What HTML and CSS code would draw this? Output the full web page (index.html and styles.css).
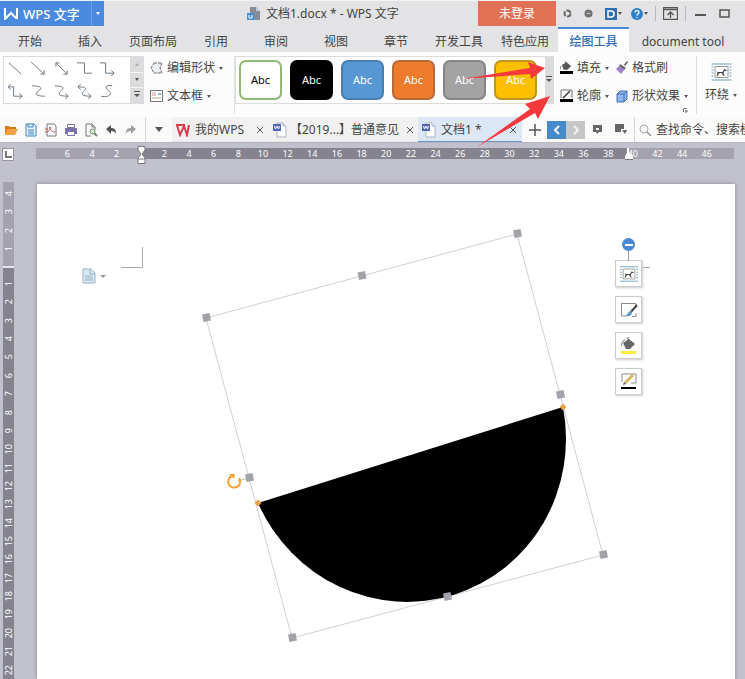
FILE: index.html
```html
<!DOCTYPE html>
<html lang="zh-CN">
<head>
<meta charset="utf-8">
<meta name="viewport" content="width=device-width, initial-scale=1">
<title>文档1.docx * - WPS 文字</title>
<link rel="stylesheet" href="styles.css">
</head>
<body>
<svg class="defs" aria-hidden="true">
  <defs>
    <symbol id="word" viewBox="0 0 14 16"><path d="M4 1h6l3 3v11H4z" fill="#fff" stroke="#a9b2c4"/><path d="M10 1v3h3" fill="#e6ebf4" stroke="#a9b2c4"/><path d="M0 2h8v7H0z" fill="#4f65b5"/><path d="M1.500 4l1 3 1.500-3 1.500 3 1-3" fill="none" stroke="#fff"/></symbol>
    <symbol id="bucket" viewBox="0 0 14 9"><path d="M2 4l5-3 5 4-4 4H4z" fill="#555"/><path d="M6 0v4M1 5c-1 1-1 2 0 3" stroke="#555" fill="none"/></symbol>
    <symbol id="dog" viewBox="0 0 20 18"><path d="M0 1h20M0 17h20M0 4h2M0 7h2M0 10h2M0 13h2M18 4h2M18 7h2M18 10h2M18 13h2" stroke="#6fa0bd"/><path d="M3.500 3.500h13v11h-13z" fill="#fff" stroke="#999"/><path d="M5 8l1 1h5l2-3 2 1v1h-2l-1 2 1 3h-1l-2-3H8l-2 3H5l1-3z" fill="#444"/></symbol>
    <symbol id="cross" viewBox="0 0 8 8"><path d="M1 1l6 6M7 1L1 7" fill="none" stroke="#555"/></symbol>
  </defs>
</svg>

<header class="titlebar">
  <button class="brand">
    <svg width="14" height="12" viewBox="0 0 14 12"><path d="M1 0v11l6-6 5 5h1V0" fill="none" stroke="#fff" stroke-width="2"/></svg>
    <b>WPS 文字</b><span class="brand-caret"><i class="caret"></i></span>
  </button>
  <div class="doc-title">
    <svg width="14" height="14" viewBox="0 0 14 14"><path d="M3 0h6l4 4v9H7V6H3z" fill="#858c98"/><path d="M9 0v4h4" fill="#c8ccd3"/><path d="M0 6h7v7H0z" fill="#4b8ecb"/><path d="M2 8v3h3V8" fill="none" stroke="#fff"/></svg>
    <span>文档1.docx * - WPS 文字</span>
  </div>
  <button class="login">未登录</button>
  <div class="window-tools">
    <button aria-label="同步"><svg width="9" height="9" viewBox="0 0 9 9"><circle cx="4.500" cy="4.500" r="3" fill="none" stroke="#666" stroke-width="2" stroke-dasharray="5 1.300"/></svg></button>
    <button aria-label="皮肤"><svg width="9" height="9" viewBox="0 0 9 9"><circle cx="4.500" cy="4.500" r="4" fill="#747474"/><path d="M3 4.500h3" stroke="#ccc"/></svg></button>
    <button aria-label="稻壳"><svg width="12" height="12" viewBox="0 0 12 12"><path d="M0 0h12v12H0z" fill="#2f6fb0"/><path d="M3 3h3c4 0 4 6 0 6H3z" fill="none" stroke="#fff" stroke-width="1.500"/></svg><i class="caret"></i></button>
    <button aria-label="帮助"><svg width="12" height="12" viewBox="0 0 12 12"><circle cx="6" cy="6" r="6" fill="#2d80c8"/><path d="M4 4.500c0-2.500 4-2.500 4 0 0 1.500-2 1.500-2 3M6 9v1" fill="none" stroke="#fff" stroke-width="1.300"/></svg><i class="caret"></i></button>
    <span class="rule"></span>
    <button aria-label="功能区"><svg width="15" height="13" viewBox="0 0 15 13"><path d="M.5.500h14v12H.500zM0 2.500h15M7.500 11V5M4.500 8l3-3 3 3" fill="none" stroke="#555" stroke-width="1.300"/></svg></button>
    <span class="rule"></span>
    <button class="win" aria-label="最小化"><svg width="11" height="10" viewBox="0 0 11 10"><path d="M0 6h11" stroke="#555" stroke-width="2"/></svg></button>
    <button class="win" aria-label="最大化"><svg width="11" height="9" viewBox="0 0 11 9"><path d="M1 1h9v7H1z" fill="none" stroke="#555" stroke-width="1.500"/></svg></button>
  </div>
</header>

<nav class="tabs">
  <a href="#">开始</a><a href="#">插入</a><a href="#" class="wide">页面布局</a><a href="#">引用</a><a href="#">审阅</a><a href="#">视图</a><a href="#">章节</a><a href="#" class="wide">开发工具</a><a href="#" class="wide">特色应用</a><a href="#" class="wide current">绘图工具</a><a href="#" class="latin">document tool</a>
</nav>

<section class="ribbon">
  <div class="gallery lines">
    <div class="line-grid">
      <button aria-label="直线"><svg viewBox="0 0 16 16"><path d="M1 2l13 12"/></svg></button>
      <button aria-label="箭头"><svg viewBox="0 0 16 16"><path d="M0 1l14 13M14 10v4h-4"/></svg></button>
      <button aria-label="双箭头"><svg viewBox="0 0 16 16"><path d="M2 2l12 12M14 10v4h-4M2 6V2h4"/></svg></button>
      <button aria-label="肘形"><svg viewBox="0 0 16 16"><path d="M0 2h8v11h8"/></svg></button>
      <button aria-label="肘形箭头"><svg viewBox="0 0 16 16"><path d="M0 2h6v11h9M12 10l3 3-3 3"/></svg></button>
      <button aria-label="肘形双箭头"><svg viewBox="0 0 16 16"><path d="M0 3h6v10h9M12 10l3 3-3 3M3 0L0 3l3 3"/></svg></button>
      <button aria-label="曲线"><svg viewBox="0 0 16 16"><path d="M1 2c15 0 8 5 5 7-2 3 3 4 9 4"/></svg></button>
      <button aria-label="曲线箭头"><svg viewBox="0 0 16 16"><path d="M1 2c14 0 7 5 5 7-2 3 2 4 9 4M12 10l3 3-3 3"/></svg></button>
      <button aria-label="曲线双箭头"><svg viewBox="0 0 16 16"><path d="M1 3c13 0 7 4 5 6-2 3 2 4 9 4M12 10l3 3-3 3M4 0L1 3l3 3"/></svg></button>
      <button aria-label="自由曲线"><svg viewBox="0 0 16 16"><path d="M13 2C7 0 4 4 9 7s1 8-8 6"/></svg></button>
    </div>
    <div class="steps"><button aria-label="上"><i class="caret up"></i></button><button aria-label="下"><i class="caret"></i></button><button aria-label="更多"><i class="caret more"></i></button></div>
  </div>
  <div class="stack edit">
    <button><svg width="13" height="12" viewBox="0 0 13 12"><path d="M4 1h8l-2 5 2 5H4L1 6z" fill="#eceef1" stroke="#666" stroke-dasharray="3 1"/></svg><span>编辑形状</span><i class="caret"></i></button>
    <button><svg width="13" height="12" viewBox="0 0 13 12"><path d="M.5.500h12v11H.500z" fill="#fff" stroke="#777"/><path d="M2 3h4M2 5h4M2 8h9" stroke="#c99b91"/><path d="M8 3h3v2H8z" fill="#9bb6d2"/></svg><span>文本框</span><i class="caret"></i></button>
  </div>
  <div class="gallery presets">
    <button class="preset p-white">Abc</button><button class="preset p-black">Abc</button><button class="preset p-blue">Abc</button><button class="preset p-orange">Abc</button><button class="preset p-gray">Abc</button><button class="preset p-gold">Abc</button>
    <button class="expand" aria-label="更多样式"><i class="caret more"></i></button>
  </div>
  <div class="stack format">
    <button><svg width="13" height="14" viewBox="0 0 13 14"><use href="#bucket" width="13" height="9"/><path d="M0 10h13v3H0z"/></svg><span>填充</span><i class="caret"></i></button>
    <button><svg width="13" height="14" viewBox="0 0 13 14"><path d="M1 9V1h11v8" fill="none" stroke="#777"/><path d="M3 9l7-7" stroke="#333" stroke-width="1.500"/><path d="M0 10h13v3H0z"/></svg><span>轮廓</span><i class="caret"></i></button>
  </div>
  <div class="stack effects">
    <button><svg width="12" height="14" viewBox="0 0 12 14"><path d="M8 4l3-4 1 1-3 4z" fill="#555"/><path d="M4 3l6 4-2 2-5-4z" fill="#666"/><path d="M3 5l5 4-3 4-5-5z" fill="#a17fce"/></svg><span>格式刷</span></button>
    <button><svg width="12" height="13" viewBox="0 0 12 13"><path d="M1 4l3-3h7v8l-3 3H1z" fill="#8fb4ea" stroke="#416cb5"/><path d="M1 4h7v8M8 4l3-3" fill="none" stroke="#416cb5"/></svg><span>形状效果</span><i class="caret"></i></button>
    <svg class="launcher" width="5" height="5" viewBox="0 0 5 5"><path d="M.5 4V.500H4M2 2l2 2M4 2v2H2" fill="none" stroke="#777"/></svg>
  </div>
  <button class="wrap"><svg width="21" height="18"><use href="#dog" width="21" height="18"/></svg><span>环绕<i class="caret"></i></span></button>
</section>

<div class="quickbar">
  <div class="quick-icons">
    <button aria-label="打开"><svg viewBox="0 0 14 14"><path d="M1 12V3h4l1 1h6v2H4z" fill="#d67a18"/><path d="M1 12l3-6h10l-3 6z" fill="#f2a041"/></svg></button>
    <button aria-label="保存"><svg viewBox="0 0 14 14"><path d="M2 1h8l2 2v10H2z" fill="#eaf4fd" stroke="#3e83bf"/><path d="M4 1v3h5V1M4 7h6M4 9h6M4 11h6" fill="none" stroke="#3e83bf"/></svg></button>
    <button aria-label="导出"><svg viewBox="0 0 14 14"><path d="M3 1h7l2 2v10H3z" fill="#fff" stroke="#777"/><path d="M1 9c6 0 7-5 5-5s1 5 5 5M1 6h3" fill="none" stroke="#c94d4d"/></svg></button>
    <button aria-label="打印"><svg viewBox="0 0 14 14"><path d="M1 5h12v6H1z" fill="#7a70ad"/><path d="M3.500 1.500h7v3h-7zM3.500 8.500h7v4h-7z" fill="#fff" stroke="#7a70ad"/></svg></button>
    <button aria-label="打印预览"><svg viewBox="0 0 14 14"><path d="M7 13H2V1h6l3 3v3M8 1v3h3" fill="none" stroke="#777"/><circle cx="8.500" cy="8.500" r="2.500" fill="#e5f0e3" stroke="#66905f"/><path d="M10 10l3 3" stroke="#66905f" stroke-width="2"/></svg></button>
    <button aria-label="撤销"><svg viewBox="0 0 14 14"><path d="M2 6l5-4v3c4 0 5 2 5 6-1-2-2-3-5-3v3z" fill="#555"/></svg></button>
    <button aria-label="恢复"><svg viewBox="0 0 14 14"><path d="M12 6L7 2v3c-4 0-5 2-5 6 1-2 2-3 5-3v3z" fill="#a0a0a0"/></svg></button>
  </div>
  <button class="dropdown" aria-label="自定义"><i class="caret big"></i></button>
  <div class="doc-tab home"><svg width="14" height="13" viewBox="0 0 14 13"><path d="M1 1l3 10 4-9 3 9 2-10M0 1h9" fill="none" stroke="#d63e4c" stroke-width="2"/></svg><a href="#">我的WPS</a><button class="close" aria-label="关闭"><svg width="8" height="8"><use href="#cross"/></svg></button></div>
  <div class="doc-tab second"><svg width="14" height="16"><use href="#word"/></svg><a href="#">【2019...】普通意见</a><button class="close" aria-label="关闭"><svg width="8" height="8"><use href="#cross"/></svg></button></div>
  <div class="doc-tab active"><svg width="14" height="16"><use href="#word"/></svg><a href="#">文档1 *</a><button class="close" aria-label="关闭"><svg width="8" height="8"><use href="#cross"/></svg></button></div>
  <button class="new" aria-label="新建"><svg width="12" height="12" viewBox="0 0 12 12"><path d="M6 0v12M0 6h12" stroke="#555" stroke-width="1.500"/></svg></button>
  <button class="arrow back" aria-label="后退"><svg width="8" height="10" viewBox="0 0 8 10"><path d="M6 1L2 5l4 4" fill="none" stroke="#fff" stroke-width="2"/></svg></button>
  <button class="arrow" aria-label="前进"><svg width="8" height="10" viewBox="0 0 8 10"><path d="M2 1l4 4-4 4" fill="none" stroke="#f2f2f2" stroke-width="2"/></svg></button>
  <button class="tool" aria-label="标记"><svg width="9" height="10" viewBox="0 0 9 10"><path d="M0 0h9v7H6l-2 2-1-2H0z" fill="#666"/><path d="M3 3h3v2H3z" fill="#fff"/></svg></button>
  <button class="tool" aria-label="插件"><svg width="12" height="11" viewBox="0 0 12 11"><path d="M0 0h9v5H6v3H0zM7 6h5l-2 4z" fill="#666"/></svg></button>
  <label class="search"><svg width="12" height="12" viewBox="0 0 12 12"><circle cx="5" cy="5" r="4" fill="none" stroke="#aaa"/><path d="M8 8l4 4" stroke="#999" stroke-width="1.500"/></svg><input type="text" aria-label="查找" placeholder="查找命令、搜索模板"></label>
</div>

<main class="workspace">
  <div class="ruler-row">
    <span class="tabstop"></span>
    <div class="hruler">
      <div class="seg left"><span>6</span><span>4</span><span>2</span></div>
      <div class="seg right"><span>2</span><span>4</span><span>6</span><span>8</span><span>10</span><span>12</span><span>14</span><span>16</span><span>18</span><span>20</span><span>22</span><span>24</span><span>26</span><span>28</span><span>30</span><span>32</span><span>34</span><span>36</span><span>38</span><span>40</span><span>42</span><span>44</span><span>46</span></div>
      <svg class="indent first" width="9" height="18" viewBox="0 0 9 18"><path d="M1 .5h7V4L5 8l3 4v5.500H1V12l3-4-3-4zM1 13h7" fill="#fff" stroke="#777"/></svg>
      <svg class="indent last" width="8" height="12" viewBox="0 0 8 12"><path d="M2 0v5l-2 3v4h8V8L4 4V0z" fill="#fff"/><path d="M0 11.500h8" stroke="#777"/></svg>
    </div>
  </div>
  <div class="canvas-row">
    <div class="vruler">
      <div class="vseg top"><span>4</span><span>3</span><span>2</span><span>1</span></div>
      <div class="vseg body"><span>1</span><span>2</span><span>3</span><span>4</span><span>5</span><span>6</span><span>7</span><span>8</span><span>9</span><span>10</span><span>11</span><span>12</span><span>13</span><span>14</span><span>15</span><span>16</span><span>17</span><span>18</span><span>19</span><span>20</span><span>21</span><span>22</span></div>
    </div>
    <article class="page">
      <svg class="drawing" width="698" height="495" viewBox="37 184 698 495">
        <path d="M142.500 247v20.500H121M642 267.500h8" fill="none" stroke="#aaa"/>
        <path d="M83 269h8l4 4v10H83z" fill="#dce9f1" stroke="#94b2c7"/><path d="M90 269v5h5M85 276h7M85 278h8M85 280h8" fill="none" stroke="#94b2c7"/><path d="M100 275h6l-3 3z" fill="#999"/>
        <path d="M206 318L517 234 603 555 292 638z" fill="none" stroke="#d0d0d4"/>
        <path d="M258 503L563 407A161 166 -15 0 1 258 503z"/>
        <path d="M238 481l11-3" stroke="#bbb"/>
        <g fill="#a2a2a9">
          <path id="handle" d="M202 314.500l7.500-1.500 1.500 7.500-7.500 1.500z"/>
          <use href="#handle" x="155.500" y="-42"/><use href="#handle" x="311" y="-84"/><use href="#handle" x="354" y="77"/><use href="#handle" x="397" y="237"/><use href="#handle" x="241" y="279"/><use href="#handle" x="86" y="320"/><use href="#handle" x="43" y="160"/>
        </g>
        <path d="M258 499.500l3.500 3.500-3.500 3.500-3.500-3.500zM563 403.500l3.500 3.500-3.500 3.500-3.500-3.500z" fill="#e8a050"/>
        <path d="M239 478a6 6 0 1 1-7-2" fill="none" stroke="#efa52f" stroke-width="2"/><path d="M229 474l6 0-1 5z" fill="#efa52f"/>
      </svg>
      <div class="float-tools">
        <button class="collapse" aria-label="收起"></button>
        <button class="float" aria-label="环绕方式"><svg width="18" height="18" viewBox="0 0 20 18"><use href="#dog" width="20" height="18"/></svg></button>
        <button class="float" aria-label="形状样式"><svg width="18" height="18" viewBox="0 0 18 18"><path d="M2 2.500h14M1.500 2v13H6M16 3v4M12 15.500h4V12" fill="none" stroke="#888"/><path d="M17 4l-7 8" stroke="#444" stroke-width="2"/><path d="M11 10c-3 0-3 4-6 5 4 1 7 0 7-4z" fill="#5a99d0"/></svg></button>
        <button class="float" aria-label="填充颜色"><svg width="18" height="18" viewBox="0 0 18 18"><path d="M3 6l6-4 6 5-5 5H6z" fill="#666"/><path d="M8 0v6M5 3C2 4 1 7 2 9" fill="none" stroke="#666"/><path d="M1 14h15v3H1z" fill="#f7ed3f"/></svg></button>
        <button class="float" aria-label="轮廓颜色"><svg width="18" height="18" viewBox="0 0 18 18"><path d="M2 9V1h14v9h-5" fill="none" stroke="#888"/><path d="M5 10l8-8" stroke="#dbb66a" stroke-width="3"/><path d="M3 12l1-3 2 2z" fill="#555"/><path d="M1 14h15v2H1z"/></svg></button>
      </div>
    </article>
  </div>
</main>
<svg class="pointers" width="90" height="86" viewBox="462 62 90 86" aria-hidden="true"><path d="M462 79l68-11-2-6 17 6-14 11-1-5zM477 147l53-38-5-5 25-8-12 23-3-6z" fill="#f7383c"/></svg>
</body>
</html>
```
FILE: styles.css
```css
* { box-sizing: border-box; }
body {
  margin: 0;
  min-height: 100vh;
  display: flex;
  flex-direction: column;
  position: relative;
  overflow: hidden;
  background: #e3e3e5;
  color: #444;
  font: 12px/16px "Noto Sans", "Noto Sans CJK SC", sans-serif;
}
button, input {
  font: inherit;
  color: inherit;
  border: 0;
  padding: 0;
  margin: 0;
  background: none;
}
button { white-space: nowrap; }
a { color: inherit; text-decoration: none; white-space: nowrap; }
svg { flex: none; }
.defs { position: absolute; width: 0; height: 0; }

.caret {
  display: inline-block;
  flex: none;
  width: 0;
  height: 0;
  border: 2px solid transparent;
  border-top: 3px solid #555;
  border-bottom: 0;
}
.caret.up { border-top: 0; border-bottom: 3px solid #aaa; }
.caret.big { border-width: 5px 4px 0; }
.caret.more { border-width: 3px 3px 0; position: relative; }
.caret.more::before {
  content: "";
  position: absolute;
  left: -3px;
  top: -6px;
  width: 6px;
  height: 1px;
  background: #555;
}

.titlebar { display: flex; height: 26px; align-items: center; border-top: 1px solid #f3f3f3; }
.brand {
  display: flex;
  align-items: center;
  width: 104px;
  height: 25px;
  padding-left: 4px;
  gap: 5px;
  background: #4a8ade;
  color: #fff;
}
.brand b { font-weight: 500; font-size: 13px; }
.brand-caret { margin-left: auto; padding: 0 4px; display: flex; height: 25px; align-items: center; border-left: 1px solid #6ca3e8; }
.brand-caret .caret { border-top-color: #fff; }
.doc-title { flex: 1; display: flex; gap: 5px; align-items: center; padding-left: 143px; white-space: nowrap; }
.login { width: 78px; height: 25px; background: #e17154; color: #fff; }
.window-tools { display: flex; align-items: center; gap: 9px; width: 189px; padding-left: 7px; }
.window-tools button { display: flex; align-items: center; gap: 1px; min-width: 12px; }
.window-tools .rule { width: 1px; height: 15px; margin: 0 -2px; background: #b9b9bb; }
.window-tools .win { width: 15px; justify-content: center; }

.tabs { display: flex; height: 26px; }
.tabs a { width: 60px; text-align: center; line-height: 32px; }
.tabs a.wide { width: 66px; }
.tabs a.current { width: 71px; background: #fdfdfd; border-top: 2px solid #4a8ade; color: #2e6db4; line-height: 26px; font-weight: 500; margin-top: 1px; }
.tabs a.latin { width: 108px; }

.ribbon { display: flex; height: 65px; background: #fcfcfc; padding: 4px 0 0 3px; overflow: hidden; }
.gallery { display: flex; height: 48px; border: 1px solid #dcdcde; background: #fff; }
.lines { width: 141px; }
.line-grid { flex: 1; display: grid; grid-template-columns: repeat(5, 23px); grid-template-rows: 23px 23px; }
.line-grid button { display: grid; place-items: center; }
.line-grid svg { width: 15px; height: 15px; fill: none; stroke: #65717c; }
.steps { display: grid; width: 13px; grid-template-rows: repeat(3, 1fr); gap: 1px; background: #f4f4f4; }
.steps button { display: grid; place-items: center; background: #dcdcde; }
.stack { display: flex; flex-direction: column; gap: 8px; position: relative; padding-top: 2px; }
.stack button { display: flex; align-items: center; gap: 4px; height: 20px; }
.edit { width: 91px; padding-left: 6px; height: 58px; border-right: 1px solid #e2e2e4; }
.presets { width: 319px; padding-left: 3px; gap: 8px; align-items: center; }
.preset { width: 43px; height: 40px; flex: none; border: 2px solid; border-radius: 7px; color: #fff; font-size: 11px; }
.p-white { background: #fff; border-color: #8fb974; color: #000; }
.p-black { background: #000; border-color: #000; }
.p-blue { background: #5797d5; border-color: #4a7eae; }
.p-orange { background: #ef7b2d; border-color: #b96a38; }
.p-gray { background: #a3a3a3; border-color: #858585; }
.p-gold { background: #fcc000; border-color: #bf9624; }
.presets .expand { align-self: stretch; width: 13px; margin-left: auto; background: #dcdcde; display: grid; place-items: center; }
.format { padding-left: 6px; width: 62px; }
.effects { width: 81px; height: 58px; border-right: 1px solid #dedee0; }
.launcher { position: absolute; right: 8px; bottom: 1px; }
.wrap { display: flex; flex-direction: column; align-items: flex-start; gap: 6px; padding: 7px 0 0 8px; }
.wrap svg { margin-left: 6px; }
.wrap span { display: flex; align-items: center; gap: 4px; }

.quickbar { display: flex; align-items: stretch; height: 25px; background: #fafafa; overflow: hidden; }
.quick-icons { display: flex; width: 146px; padding-left: 1px; border-right: 1px solid #d6d6d8; }
.quick-icons button { width: 20px; display: grid; place-items: center; }
.quick-icons svg { width: 14px; height: 14px; }
.dropdown { width: 26px; display: grid; place-items: center; }
.doc-tab { display: flex; align-items: center; gap: 5px; background: #f1f1f2; padding: 2px 0 0 4px; border-bottom: 1px solid #e6e6e8; }
.home { width: 97px; }
.second { width: 149px; gap: 3px; }
.active { width: 104px; background: #dce7f6; border-bottom-color: #6a94cb; }
.close { margin-left: auto; width: 18px; display: grid; place-items: center; }
.new { width: 25px; display: grid; place-items: center; }
.arrow { width: 19px; height: 18px; align-self: center; background: #c6c6c8; display: grid; place-items: center; }
.back { background: #468ac9; }
.tool { width: 24px; display: grid; place-items: center; }
.search { flex: 1; min-width: 0; display: flex; align-items: center; gap: 5px; margin-left: 1px; padding-left: 4px; border-left: 1px solid #d6d6d8; }
.search input { flex: 1; min-width: 0; }
.search input::placeholder { color: #444; opacity: 1; }

.workspace { flex: 1; display: flex; flex-direction: column; background: #c1c0cd; }
.ruler-row { display: flex; padding: 5px 11px 0 2px; height: 42px; border-top: 1px solid #b6b6bf; }
.tabstop { width: 12px; height: 13px; border: 1px solid #999; background: #fff; display: grid; place-items: center; margin-right: 22px; }
.tabstop::before { content: ""; width: 5px; height: 5px; border: solid #777; border-width: 0 0 2px 2px; }
.hruler { flex: 1; display: flex; height: 11px; position: relative; color: #fff; font-size: 9px; line-height: 11px; background: linear-gradient(90deg, #a3a2ae 15%, #84838e 15% 85%, #a3a2ae 85%); }
.seg { display: flex; }
.seg span { flex: 1; text-align: center; }
.left { width: 105px; padding: 0 12px 0 19px; }
.right { flex: 1; padding: 0 15px 0 11px; }
.indent { position: absolute; left: 15%; top: -2px; margin-left: -4px; }
.last { left: 85%; top: 0; }

.canvas-row { flex: 1; display: flex; gap: 23px; padding-right: 10px; }
.vruler { width: 11px; margin-left: 3px; margin-top: -2px; display: flex; flex-direction: column; gap: 2px; background: #e6e6ec; color: #fff; font-size: 9px; line-height: 11px; }
.vseg { display: flex; flex-direction: column; }
.vseg span { flex: 1; display: grid; place-items: center; writing-mode: vertical-rl; transform: rotate(180deg); }
.top { height: 84px; padding: 3px 0 8px; background: #a3a2ae; }
.body { flex: 1; padding-top: 7px; background: #84838e; }
.page { flex: 1; position: relative; background: #fff; box-shadow: 0 0 4px #85858f; }
.drawing { display: block; }
.float-tools { position: absolute; left: 578px; top: 54px; display: flex; flex-direction: column; align-items: center; gap: 9px; }
.collapse { width: 13px; height: 13px; border-radius: 50%; background: #4a88d3; display: grid; place-items: center; position: relative; }
.collapse::before { content: ""; width: 8px; height: 2px; background: #fff; }
.collapse::after { content: ""; position: absolute; left: 6px; top: 13px; width: 1px; height: 10px; background: #999; }
.float { width: 27px; height: 27px; background: #fff; border: 1px solid #ccc; box-shadow: 1px 1px 2px #ccc; display: grid; place-items: center; }
.pointers { position: absolute; left: 462px; top: 62px; pointer-events: none; }
```
